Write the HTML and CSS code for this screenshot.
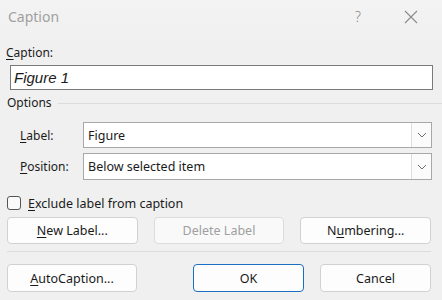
FILE: index.html
```html
<!DOCTYPE html>
<html>
<head>
<meta charset="utf-8">
<link rel="stylesheet" href="styles.css">
</head>
<body>
<div class="dialog">
  <div class="titlebar">
    <span class="title">Caption</span>
    <span class="help">?</span>
    <svg class="close" width="14" height="14" viewBox="0 0 14 14"><path d="M1 1 L13 13 M13 1 L1 13" stroke="#8a8a8a" stroke-width="1.1" fill="none"/></svg>
  </div>
  <div class="content">
    <div class="lbl"><u>C</u>aption:</div>
    <div class="input">Figure 1</div>
    <div class="group"><span>Options</span><div class="rule"></div></div>
    <div class="grid">
      <div class="flabel"><u>L</u>abel:</div>
      <div class="combo c1"><span class="val">Figure</span><span class="drop"><svg width="10" height="6" viewBox="0 0 10 6"><path d="M1 1 L5 5 L9 1" stroke="#707070" stroke-width="1" fill="none"/></svg></span></div>
      <div class="flabel"><u>P</u>osition:</div>
      <div class="combo c2"><span class="val">Below selected item</span><span class="drop"><svg width="10" height="6" viewBox="0 0 10 6"><path d="M1 1 L5 5 L9 1" stroke="#707070" stroke-width="1" fill="none"/></svg></span></div>
    </div>
    <div class="check"><span class="box"></span><span><u>E</u>xclude label from caption</span></div>
    <div class="row3">
      <div class="btn"><u>N</u>ew Label...</div>
      <div class="btn disabled">Delete Label</div>
      <div class="btn">N<u>u</u>mbering...</div>
    </div>
    <div class="sep"></div>
    <div class="row2">
      <div class="btn auto"><u>A</u>utoCaption...</div>
      <div class="btn ok">OK</div>
      <div class="btn cancel">Cancel</div>
    </div>
  </div>
</div>
</body>
</html>
```
FILE: styles.css
```css
html, body {
  margin: 0;
  padding: 0;
  background: #f0f0f0;
}
.dialog {
  width: 442px;
  height: 300px;
  background: #f0f0f0;
  font-family: "Noto Sans", "Open Sans", sans-serif;
  font-size: 12px;
  color: #1a1a1a;
  overflow: hidden;
}
u {
  text-decoration: underline;
  text-underline-offset: 2px;
}
.titlebar {
  height: 44px;
  display: flex;
  align-items: flex-start;
  padding-top: 6px;
  box-sizing: border-box;
  background: linear-gradient(#f3f3f3, #f0f0f0);
}
.title {
  margin-left: 8px;
  font-size: 14px;
  line-height: 22px;
  color: #a0a0a0;
  flex: 1;
}
.help {
  font-size: 14px;
  line-height: 22px;
  color: #8a8a8a;
  margin-right: 43px;
  font-weight: 300;
}
.close {
  margin-top: 4px;
  margin-right: 24px;
}
.content {
  padding: 0 9px 0 7px;
}
.lbl {
  height: 18px;
  line-height: 18px;
  margin-left: -1px;
}
.input {
  margin: 3px 0 0 3px;
  height: 25px;
  box-sizing: border-box;
  border: 1px solid #7a7a7a;
  background: #ffffff;
  font-family: "Liberation Sans", Arial, sans-serif;
  font-style: italic;
  font-size: 15px;
  line-height: 23px;
  padding-left: 3px;
  color: #1a1a1a;
}
.group {
  margin-top: 3px;
  height: 20px;
  display: flex;
  align-items: center;
  margin-right: -9px;
}
.group span {
  line-height: 20px;
}
.rule {
  flex: 1;
  height: 1px;
  background: #dcdcdc;
  margin-left: 6px;
}
.grid {
  display: grid;
  grid-template-columns: 63px 1fr;
  row-gap: 5px;
  margin-top: 9px;
  margin-left: 13px;
  margin-right: 1px;
}
.flabel {
  display: flex;
  align-items: center;
}
.combo {
  display: flex;
  align-items: stretch;
  box-sizing: border-box;
  border: 1px solid #a8a8a8;
  background: #ffffff;
}
.c1 { height: 26px; }
.c2 { height: 27px; }
.val {
  flex: 1;
  padding-left: 4px;
  display: flex;
  align-items: center;
  font-size: 12.5px;
}
.drop {
  width: 20px;
  box-sizing: border-box;
  border-left: 1px solid #dedede;
  background: #fbfbfb;
  display: flex;
  align-items: center;
  justify-content: center;
}
.check {
  margin-top: 15px;
  height: 16px;
  display: flex;
  align-items: center;
}
.box {
  width: 12px;
  height: 12px;
  border: 1px solid #555;
  border-radius: 3px;
  background: #fafafa;
  margin-right: 7px;
}
.check span:last-child {
  font-size: 12.5px;
}
.row3 {
  margin-top: 6px;
  display: grid;
  grid-template-columns: 1fr 1fr 1fr;
  column-gap: 16px;
  margin-right: 2px;
}
.btn {
  height: 27px;
  box-sizing: border-box;
  border: 1px solid #d1d1d1;
  border-radius: 4px;
  background: #fdfdfd;
  display: flex;
  align-items: center;
  justify-content: center;
  font-size: 12.5px;
}
.btn.disabled {
  color: #a0a0a0;
  background: #f9f9f9;
  border-color: #dcdcdc;
}
.sep {
  margin-top: 7px;
  height: 1px;
  background: #dcdcdc;
  margin-right: 2px;
}
.row2 {
  margin-top: 12px;
  display: flex;
  gap: 16px;
  margin-right: 2px;
}
.row2 .btn {
  height: 28px;
}
.auto {
  width: 130px;
  margin-right: auto;
}
.ok {
  width: 111px;
  border-color: #1a6fc2;
}
.cancel {
  width: 111px;
}
```
